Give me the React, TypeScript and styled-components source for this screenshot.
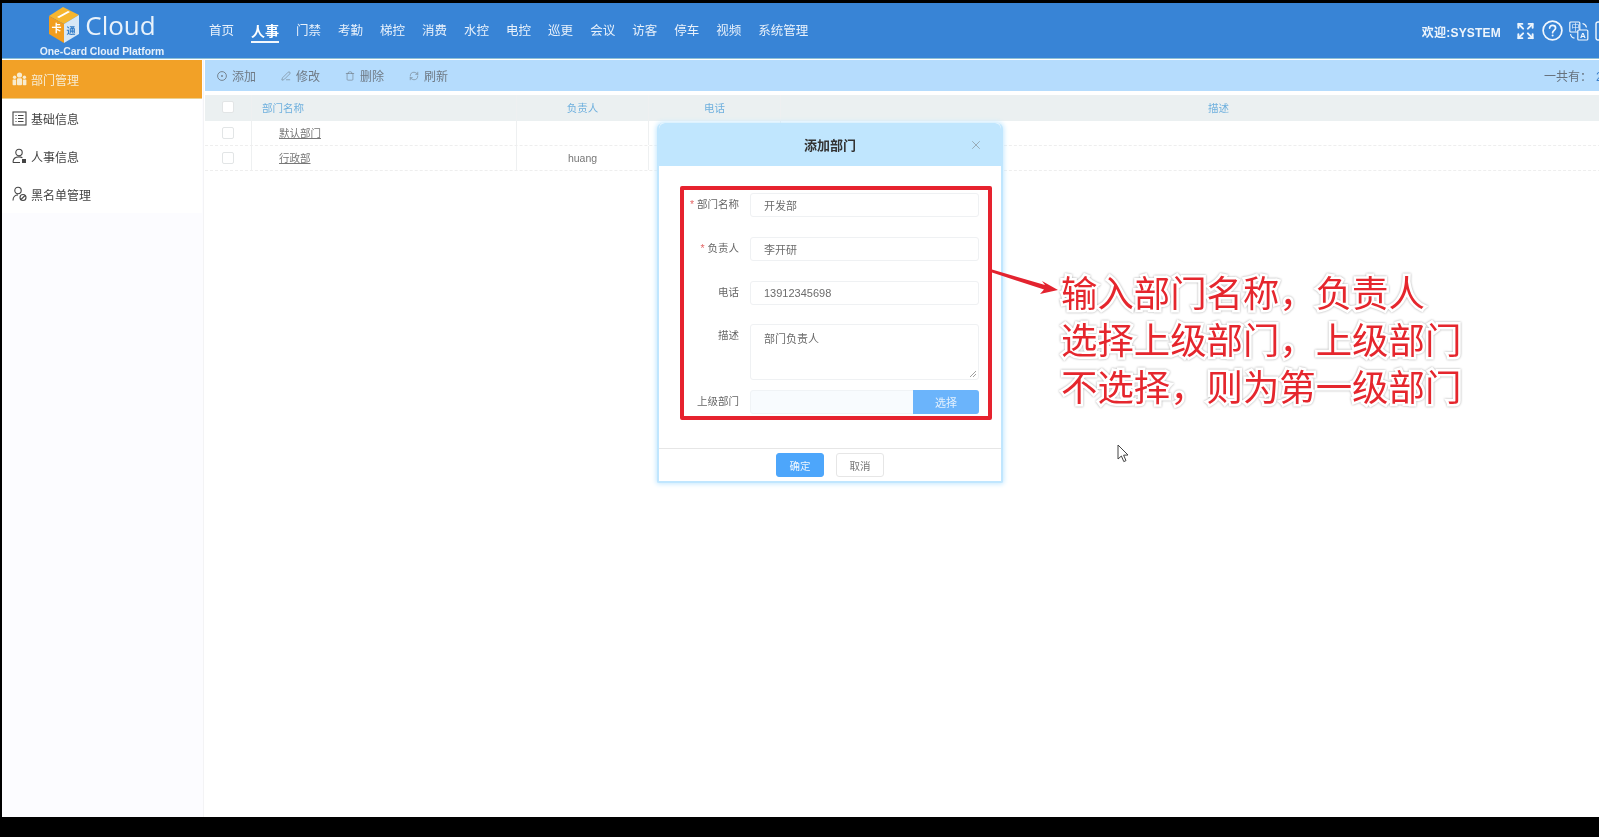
import React from "react";
import styled, { createGlobalStyle } from "styled-components";
import { Expand, PenLine, Trash, RefreshCw, X } from "lucide-react";

const FONT = `"Liberation Sans", "Noto Sans CJK SC", sans-serif`;

const Global = createGlobalStyle`
  html, body { margin: 0; padding: 0; background: #000; overflow: hidden; }
  * { box-sizing: border-box; }
  body { font-family: ${FONT}; }
`;

const Root = styled.div`
  position: relative;
  width: 1599px;
  height: 837px;
  background: #000;
  overflow: hidden;
  padding: 3px 0 0 2px;
  filter: blur(0.45px);
`;
const Page = styled.div`
  width: 1597px;
  height: 814px;
  background: #fff;
  display: flex;
  flex-direction: column;
  overflow: hidden;
`;
const Header = styled.header`
  flex: 0 0 56px;
  height: 56px;
  background: #3884d6;
  border-bottom: 1px solid #8fc0d6;
  display: flex;
  align-items: center;
  margin-bottom: 1px;
`;
const Brand = styled.div`
  flex: 0 0 200px;
  height: 55px;
  padding-top: 4px;
  display: flex;
  flex-direction: column;
  align-items: center;
`;
const BrandRow = styled.div`
  display: flex;
  align-items: center;
  gap: 6px;
  height: 36px;
  margin-left: 1px;
`;
const CloudWord = styled.span`
  font-family: "Open Sans", sans-serif;
  font-weight: 400;
  font-size: 26px;
  line-height: 36px;
  color: #e9f2fb;
  margin-top: -1px;
`;
const BrandSub = styled.div`
  margin-top: 2px;
  font-size: 10.4px;
  line-height: 13px;
  font-weight: 700;
  color: #e4effa;
  white-space: nowrap;
`;
const Nav = styled.nav`
  display: flex;
  align-items: center;
  gap: 17px;
  padding-left: 7px;
`;
const NavItem = styled.a<{ $active?: boolean }>`
  position: relative;
  font-size: ${(p) => (p.$active ? "14px" : "12.5px")};
  font-weight: ${(p) => (p.$active ? 700 : 400)};
  line-height: 18px;
  color: ${(p) => (p.$active ? "#fff" : "#e8f1fb")};
  white-space: nowrap;
  &::after {
    content: "";
    display: ${(p) => (p.$active ? "block" : "none")};
    position: absolute;
    left: 0;
    right: 0;
    bottom: -3px;
    height: 2px;
    background: #f2f7fc;
  }
`;
const Tools = styled.div`
  margin-left: auto;
  margin-right: -16px;
  display: flex;
  align-items: center;
  flex-shrink: 0;
  color: #eef5fc;
`;
const Welcome = styled.span`
  font-size: 12px;
  font-weight: 700;
  letter-spacing: 0.2px;
  margin-right: 15px;
  margin-top: 1px;
  color: #eef5fc;
  white-space: nowrap;
`;
const ToolIcon = styled.span<{ $w: number; $gap?: number }>`
  display: flex;
  width: ${(p) => p.$w}px;
  margin-right: ${(p) => p.$gap ?? 6}px;
`;
const Main = styled.div`
  flex: 1;
  min-height: 0;
  display: flex;
`;
const Sidebar = styled.aside`
  flex: 0 0 202px;
  background: #fcfcff;
  border-right: 1px solid #f3f3f5;
  padding-right: 1px;
`;
const SideList = styled.div`
  background: #fff;
  width: 200px;
`;
const SideItem = styled.div<{ $active?: boolean }>`
  height: ${(p) => (p.$active ? "39px" : "38px")};
  padding-left: 10px;
  display: flex;
  align-items: center;
  gap: 4px;
  font-size: 12px;
  color: ${(p) => (p.$active ? "#f7ecd3" : "#444")};
  background: ${(p) => (p.$active ? "#f2a127" : "#fff")};
  border-bottom: ${(p) => (p.$active ? "1px solid #ecd08e" : "none")};
  svg { flex: 0 0 15px; }
`;
const Content = styled.section`
  flex: 0 0 1451px;
  margin-left: 1px;
`;
const Toolbar = styled.div`
  height: 31px;
  background: #b5dcfd;
  display: flex;
  align-items: center;
  padding-left: 12px;
  gap: 25px;
  margin-bottom: 4px;
`;
const ToolBtn = styled.span`
  display: flex;
  align-items: center;
  gap: 5px;
  font-size: 12px;
  color: #6f7a85;
  svg { flex: 0 0 10px; }
`;
const Total = styled.span`
  margin-left: auto;
  padding-right: 38px;
  font-size: 12px;
  color: #66717c;
  white-space: nowrap;
  b { color: #3b7fc9; font-weight: 400; margin-left: 4px; }
`;
const Row = styled.div<{ $head?: boolean }>`
  display: grid;
  grid-template-columns: 47px 265px 132px 132px 1fr;
  height: ${(p) => (p.$head ? "26px" : "25px")};
  background: ${(p) => (p.$head ? "#ebf0f1" : "#fff")};
  border-bottom: ${(p) => (p.$head ? "none" : "1px dashed #eeeeee")};
  font-size: 10.5px;
  color: ${(p) => (p.$head ? "#6fb0de" : "#777")};
  & > div { padding-bottom: ${(p) => (p.$head ? "2px" : "1px")}; }
`;
const Cell = styled.div<{ $center?: boolean; $indent?: number; $edge?: boolean }>`
  display: flex;
  align-items: center;
  justify-content: ${(p) => (p.$center ? "center" : "flex-start")};
  padding-left: ${(p) => p.$indent ?? 0}px;
  border-right: ${(p) => (p.$edge ? "none" : "1px solid #eef0f1")};
`;
const Check = styled.span`
  width: 12px;
  height: 12px;
  background: #fff;
  border: 1px solid #e2e5e6;
  border-radius: 2px;
`;
const NameLink = styled.a`
  color: #777;
  text-decoration: underline;
`;

const Dialog = styled.div`
  position: absolute;
  left: 657px;
  top: 123px;
  width: 346px;
  height: 360px;
  display: flex;
  flex-direction: column;
  background: #fff;
  border: 2px solid #c0e6fe;
  border-top: none;
  border-radius: 6px 6px 2px 2px;
  box-shadow: 0 0 5px 1px #c4e8fe;
`;
const DialogHead = styled.div`
  position: relative;
  flex: 0 0 43px;
  background: #c0e6fe;
  border-radius: 6px 6px 0 0;
  display: flex;
  align-items: center;
  justify-content: center;
  font-size: 13px;
  font-weight: 700;
  color: #333;
  padding-bottom: 1px;
`;
const CloseBtn = styled.span`
  position: absolute;
  right: 18px;
  top: 15px;
  display: flex;
  color: #8f9fa8;
`;
const DialogBody = styled.div`
  flex: 1;
  padding: 20px 9px 0 21px;
`;
const Form = styled.div`
  height: 234px;
  border: 4px solid #e6222e;
  border-radius: 2px;
  padding: 3px 9px 0 0;
  display: flex;
  flex-direction: column;
`;
const FormRow = styled.div<{ $after: number }>`
  display: flex;
  gap: 11px;
  margin-bottom: ${(p) => p.$after}px;
`;
const Label = styled.label<{ $req?: boolean }>`
  flex: 0 0 55px;
  text-align: right;
  font-size: 10.5px;
  line-height: 22px;
  color: #666;
  white-space: nowrap;
  &::before {
    content: ${(p) => (p.$req ? '"* "' : '""')};
    color: #e46a6a;
  }
`;
const Field = styled.div<{ $h?: number }>`
  position: relative;
  flex: 1;
  height: ${(p) => p.$h ?? 24}px;
  border: 1px solid #eff1f3;
  border-radius: 3px;
  padding: ${(p) => (p.$h ? "5px" : "0")} 13px ${(p) => (p.$h ? "0" : "1px")};
  display: flex;
  align-items: ${(p) => (p.$h ? "flex-start" : "center")};
  font-size: 11px;
  color: #6c6c6c;
  background: #fff;
`;
const Grip = styled.svg`
  position: absolute;
  right: 1px;
  bottom: 1px;
`;
const PickerField = styled.div`
  flex: 1;
  height: 24px;
  display: flex;
  justify-content: flex-end;
  background: #f8fbfe;
  border: 1px solid #f0f3f6;
  border-radius: 3px;
`;
const PickBtn = styled.span`
  width: 66px;
  margin: -1px;
  display: flex;
  align-items: center;
  justify-content: center;
  font-size: 11px;
  color: #e5f1fd;
  background: #6bb4fb;
  border-radius: 0 3px 3px 0;
`;
const Footer = styled.div`
  flex: 0 0 33px;
  border-top: 1px solid #e6e6e6;
  display: flex;
  justify-content: center;
  align-items: flex-start;
  padding-top: 4px;
  gap: 12px;
`;
const Btn = styled.span<{ $primary?: boolean }>`
  width: 48px;
  height: 24px;
  border-radius: 3px;
  display: flex;
  align-items: center;
  justify-content: center;
  font-size: 10.5px;
  color: ${(p) => (p.$primary ? "#eef6fe" : "#777")};
  background: ${(p) => (p.$primary ? "#4da6fb" : "#fff")};
  border: 1px solid ${(p) => (p.$primary ? "#4da6fb" : "#e6e6e6")};
`;

const Note = styled.div`
  position: absolute;
  left: 1061px;
  top: 268px;
  font-family: "Noto Sans CJK SC", sans-serif;
  font-size: 36.4px;
  line-height: 47px;
  color: #e5262d;
  white-space: nowrap;
  -webkit-text-stroke: 5px #fff;
  paint-order: stroke fill;
  filter: drop-shadow(0 0 1px #aaa);
`;
const NoteLine = styled.div``;
const Overlay = styled.svg<{ $x: number; $y: number }>`
  position: absolute;
  left: ${(p) => p.$x}px;
  top: ${(p) => p.$y}px;
`;

const LogoCube = () => (
  <svg width="30" height="36" viewBox="0 0 30 36">
    <path d="M14 0 L30 8 L15 17 L0 9 Z" fill="#f6b62f" />
    <path d="M0 9 L15 17 L15 36 L0 27 Z" fill="#f29d1e" />
    <path d="M15 17 L30 8 L30 27 L15 36 Z" fill="#d8e8f6" />
    <path d="M8 10 L19 4 L21 5 L10 11 Z" fill="#fff" />
    <text x="2.5" y="25" fontSize="10" fill="#fff" fontWeight="700" fontFamily={`"Noto Sans CJK SC"`}>卡</text>
    <text x="17.5" y="27" fontSize="9" fill="#2f7bc8" fontWeight="700" fontFamily={`"Noto Sans CJK SC"`}>通</text>
  </svg>
);

const GroupIcon = () => (
  <svg width="15" height="14" viewBox="0 0 15 14" fill="#f8eccf">
    <circle cx="7.5" cy="3" r="2.6" />
    <rect x="5" y="6.2" width="5" height="7" rx="1" />
    <circle cx="2.6" cy="5.2" r="1.7" />
    <rect x="0.6" y="7.6" width="3.6" height="5.6" rx="0.8" />
    <circle cx="12.4" cy="5.2" r="1.7" />
    <rect x="10.8" y="7.6" width="3.6" height="5.6" rx="0.8" />
  </svg>
);
const ListIcon = () => (
  <svg width="15" height="15" viewBox="0 0 15 15" fill="none" stroke="#444" strokeWidth="1.1">
    <rect x="1" y="1" width="13" height="13" />
    <path d="M3.5 4.5h1M6 4.5h5.5M3.5 7.5h1M6 7.5h5.5M3.5 10.5h1M6 10.5h5.5" />
  </svg>
);
const UserCardIcon = () => (
  <svg width="15" height="16" viewBox="0 0 15 16" fill="none" stroke="#444" strokeWidth="1.1">
    <circle cx="7" cy="4.5" r="3.2" />
    <path d="M1 14.5c0-3.4 2.4-5.6 6-5.6 1.3 0 2.5.3 3.4.8M1 14.5h7" />
    <rect x="10" y="11" width="4" height="4" fill="#444" stroke="none" />
  </svg>
);
const UserBanIcon = () => (
  <svg width="15" height="16" viewBox="0 0 15 16" fill="none" stroke="#444" strokeWidth="1.1">
    <circle cx="6" cy="4.5" r="3.2" />
    <path d="M1 14.5c0-3.4 2.2-5.6 5-5.6" />
    <circle cx="11" cy="11.5" r="3" />
    <path d="M9 13.5l4-4" />
  </svg>
);
const AddIcon = () => (
  <svg width="10" height="10" viewBox="0 0 10 10" fill="none" stroke="#6f7a85" strokeWidth="0.9">
    <circle cx="5" cy="5" r="4.4" />
    <circle cx="5" cy="5" r="0.9" fill="#6f7a85" stroke="none" />
  </svg>
);
const HelpIcon = () => (
  <svg width="21" height="21" viewBox="0 0 21 21" fill="none" stroke="#f1f7fd" strokeWidth="1.7">
    <circle cx="10.5" cy="10.5" r="9.4" />
    <path d="M7.6 8.1c0-1.7 1.3-2.8 3-2.8s3 1 3 2.6c0 2.4-3 2.4-3 4.8" strokeLinecap="round" />
    <circle cx="10.6" cy="15.4" r="1" fill="#f1f7fd" stroke="none" />
  </svg>
);
const TranslateIcon = () => (
  <svg width="20" height="20" viewBox="0 0 20 20" fill="none" stroke="#f1f7fd" strokeWidth="1.2">
    <rect x="0.8" y="1" width="10" height="10" rx="1" />
    <rect x="8.8" y="9" width="10" height="10" rx="1" fill="#3884d6" />
    <text x="2.6" y="9" fontSize="8" fill="#f1f7fd" stroke="none" fontFamily={`"Noto Sans CJK SC"`}>中</text>
    <text x="11" y="17.4" fontSize="8" fill="#f1f7fd" stroke="none" fontWeight="700" fontFamily={`"Liberation Sans"`}>A</text>
    <path d="M13.5 2.5c2.2.4 3.6 1.8 4 4M1.5 13c.4 2.4 1.8 3.8 4 4.2" />
  </svg>
);
const CutIcon = () => (
  <svg width="20" height="20" viewBox="0 0 20 20" fill="none" stroke="#f1f7fd" strokeWidth="1.4">
    <rect x="1" y="1" width="18" height="18" rx="2" />
  </svg>
);

const navItems = ["首页", "人事", "门禁", "考勤", "梯控", "消费", "水控", "电控", "巡更", "会议", "访客", "停车", "视频", "系统管理"];

export default function App() {
  return (
    <Root>
      <Global />
      <Page>
        <Header>
          <Brand>
            <BrandRow>
              <LogoCube />
              <CloudWord>Cloud</CloudWord>
            </BrandRow>
            <BrandSub>One-Card Cloud Platform</BrandSub>
          </Brand>
          <Nav>
            {navItems.map((n) => (
              <NavItem key={n} $active={n === "人事"}>{n}</NavItem>
            ))}
          </Nav>
          <Tools>
            <Welcome>欢迎:SYSTEM</Welcome>
            <ToolIcon $w={19} $gap={7}><Expand size={20} strokeWidth={2.5} /></ToolIcon>
            <ToolIcon $w={21}><HelpIcon /></ToolIcon>
            <ToolIcon $w={20}><TranslateIcon /></ToolIcon>
            <ToolIcon $w={20} $gap={0}><CutIcon /></ToolIcon>
          </Tools>
        </Header>
        <Main>
          <Sidebar>
            <SideList>
              <SideItem $active><GroupIcon />部门管理</SideItem>
              <SideItem><ListIcon />基础信息</SideItem>
              <SideItem><UserCardIcon />人事信息</SideItem>
              <SideItem><UserBanIcon />黑名单管理</SideItem>
            </SideList>
          </Sidebar>
          <Content>
            <Toolbar>
              <ToolBtn><AddIcon />添加</ToolBtn>
              <ToolBtn><PenLine size={10} strokeWidth={1.4} />修改</ToolBtn>
              <ToolBtn><Trash size={10} strokeWidth={1.4} />删除</ToolBtn>
              <ToolBtn><RefreshCw size={10} strokeWidth={1.4} />刷新</ToolBtn>
              <Total>一共有：<b>2</b> 条</Total>
            </Toolbar>
            <Row $head>
              <Cell $center><Check /></Cell>
              <Cell $indent={10}>部门名称</Cell>
              <Cell $center>负责人</Cell>
              <Cell $center>电话</Cell>
              <Cell $center $edge>描述</Cell>
            </Row>
            <Row>
              <Cell $center><Check /></Cell>
              <Cell $indent={27}><NameLink>默认部门</NameLink></Cell>
              <Cell $center></Cell>
              <Cell $center></Cell>
              <Cell $edge></Cell>
            </Row>
            <Row>
              <Cell $center><Check /></Cell>
              <Cell $indent={27}><NameLink>行政部</NameLink></Cell>
              <Cell $center>huang</Cell>
              <Cell $center></Cell>
              <Cell $edge></Cell>
            </Row>
          </Content>
        </Main>
      </Page>

      <Dialog>
        <DialogHead>
          添加部门
          <CloseBtn><X size={14} strokeWidth={1.4} /></CloseBtn>
        </DialogHead>
        <DialogBody>
          <Form>
            <FormRow $after={20}><Label $req>部门名称</Label><Field>开发部</Field></FormRow>
            <FormRow $after={20}><Label $req>负责人</Label><Field>李开研</Field></FormRow>
            <FormRow $after={19}><Label>电话</Label><Field>13912345698</Field></FormRow>
            <FormRow $after={10}>
              <Label>描述</Label>
              <Field $h={56}>
                部门负责人
                <Grip width="8" height="8" viewBox="0 0 8 8" stroke="#888" strokeWidth="0.8">
                  <path d="M1 7L7 1M4 7L7 4" />
                </Grip>
              </Field>
            </FormRow>
            <FormRow $after={0}>
              <Label>上级部门</Label>
              <PickerField><PickBtn>选择</PickBtn></PickerField>
            </FormRow>
          </Form>
        </DialogBody>
        <Footer>
          <Btn $primary>确定</Btn>
          <Btn>取消</Btn>
        </Footer>
      </Dialog>

      <Overlay $x={990} $y={268} width="72" height="30" viewBox="0 0 72 30">
        <path d="M2 1.5 L55 17 L52 13 L68 22 L50 26 L54 21.5 L2 4.5 Z" fill="#e3232f" />
      </Overlay>

      <Note>
        <NoteLine>输入部门名称，负责人</NoteLine>
        <NoteLine>选择上级部门，上级部门</NoteLine>
        <NoteLine>不选择，则为第一级部门</NoteLine>
      </Note>

      <Overlay $x={1117} $y={444} width="13" height="19" viewBox="0 0 13 19">
        <path d="M1 1 L1 15 L4.4 12 L6.8 17.6 L9 16.6 L6.6 11.2 L11 11 Z" fill="#fff" stroke="#444" strokeWidth="1" />
      </Overlay>
    </Root>
  );
}
